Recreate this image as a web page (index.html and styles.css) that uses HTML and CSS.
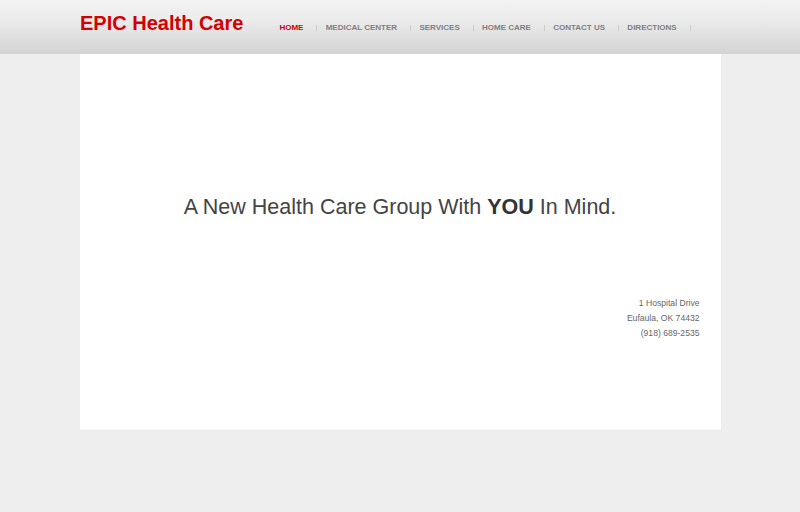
FILE: index.html
```html
<!DOCTYPE html>
<html>
<head>
<meta charset="utf-8">
<title>EPIC Health Care</title>
<link rel="stylesheet" href="styles.css">
</head>
<body>
<header class="header">
  <div class="header-inner">
    <div class="logo">EPIC Health Care</div>
    <nav class="nav">
      <a class="nav-link active" href="#">Home</a><span class="sep"></span>
      <a class="nav-link" href="#">Medical Center</a><span class="sep"></span>
      <a class="nav-link" href="#">Services</a><span class="sep"></span>
      <a class="nav-link" href="#">Home Care</a><span class="sep"></span>
      <a class="nav-link" href="#">Contact Us</a><span class="sep"></span>
      <a class="nav-link" href="#">Directions</a><span class="sep"></span>
    </nav>
  </div>
</header>
<main class="content">
  <h1 class="tagline">A New Health Care Group With <strong>YOU</strong> In Mind.</h1>
  <address class="address">
    <div>1 Hospital Drive</div>
    <div>Eufaula, OK 74432</div>
    <div>(918) 689-2535</div>
  </address>
</main>
</body>
</html>
```
FILE: styles.css
```css
* { box-sizing: border-box; }
html, body { margin: 0; padding: 0; }
body {
  background: #eeeeee;
  font-family: "Liberation Sans", Arial, sans-serif;
}
.header {
  height: 54px;
  background: linear-gradient(to bottom, #f3f3f3 0%, #ececec 35%, #d3d3d3 100%);
}
.header-inner {
  width: 640px;
  margin: 0 auto;
  height: 54px;
  display: flex;
  align-items: center;
}
.logo {
  color: #d40000;
  font-size: 20px;
  font-weight: bold;
  line-height: 24px;
  margin-top: -8px;
  white-space: nowrap;
}
.nav {
  display: flex;
  align-items: center;
  margin-left: 36px;
  margin-top: 1px;
}
.nav-link {
  font-size: 8px;
  font-weight: bold;
  text-transform: uppercase;
  color: #808080;
  text-decoration: none;
  line-height: 10px;
  white-space: nowrap;
}
.nav-link.active { color: #c80000; }
.sep {
  display: inline-block;
  width: 1px;
  height: 6px;
  background: #cdcdcd;
  margin: 0 8.3px 0 13px;
}
.content {
  width: 641px;
  margin: 0 auto;
  height: 376px;
  background: #ffffff;
  border-bottom: 1px solid #f6f6f6;
  padding: 141px 21px 0 21px;
}
.tagline {
  margin: 0;
  text-align: center;
  font-size: 21.5px;
  font-weight: normal;
  line-height: 24px;
  color: #444444;
}
.tagline strong { font-weight: bold; color: #333333; }
.address {
  margin-top: 77px;
  font-style: normal;
  text-align: right;
  font-size: 8.6px;
  line-height: 15px;
  color: #666666;
}
```
